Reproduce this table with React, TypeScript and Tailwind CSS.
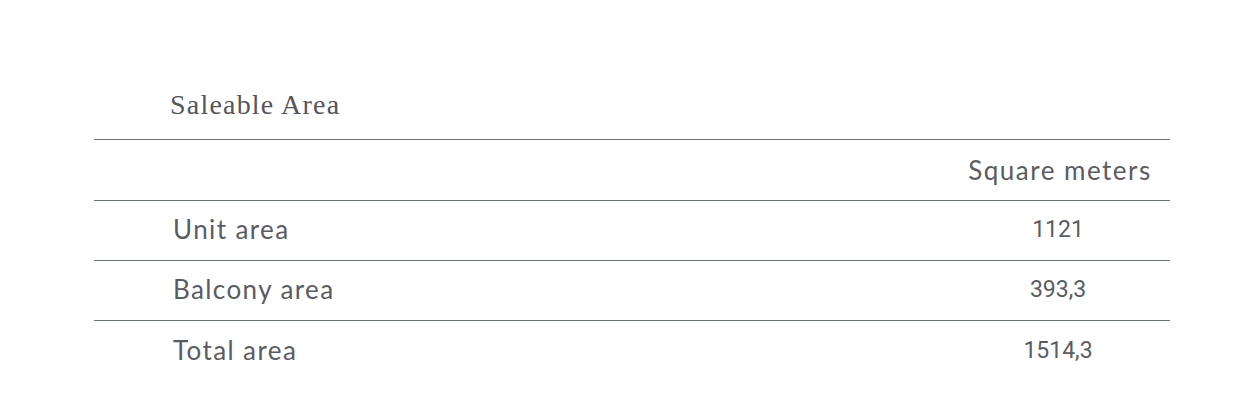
const rows = [
  { label: "Unit area", value: "1121" },
  { label: "Balcony area", value: "393,3" },
  { label: "Total area", value: "1514,3" },
];

export default function App() {
  return (
    <div className="w-[1240px] h-[418px] bg-white pt-[86px] pl-[94px] pr-[70px]">
      <h2
        className="pl-[76px] h-[53px] text-[28px] leading-[38px] tracking-[1.2px] text-[#55565b]"
        style={{ fontFamily: '"Liberation Serif", serif' }}
      >
        Saleable Area
      </h2>
      <div className="border-t border-[#6a706f]">
        <div className="flex h-[61px] items-center border-b border-[#6a706f]">
          <div className="flex-1" />
          <div
            className="w-[224px] pl-[4px] text-center text-[26px] text-[#5a5c63] tracking-[1.5px]"
            style={{ fontFamily: "Lato, sans-serif" }}
          >
            Square meters
          </div>
        </div>
        {rows.map((r, i) => (
          <div
            key={r.label}
            className={
              "flex h-[60px] items-center " +
              (i < rows.length - 1 ? "border-b border-[#6a706f]" : "")
            }
          >
            <div
              className="flex-1 pl-[79px] pb-[2px] text-[26px] text-[#5a5c63] tracking-[1.4px]"
              style={{ fontFamily: "Lato, sans-serif" }}
            >
              {r.label}
            </div>
            <div
              className="w-[224px] text-center text-[23px] text-[#5a5c63]"
              style={{ fontFamily: "Roboto, sans-serif" }}
            >
              {r.value}
            </div>
          </div>
        ))}
      </div>
    </div>
  );
}
